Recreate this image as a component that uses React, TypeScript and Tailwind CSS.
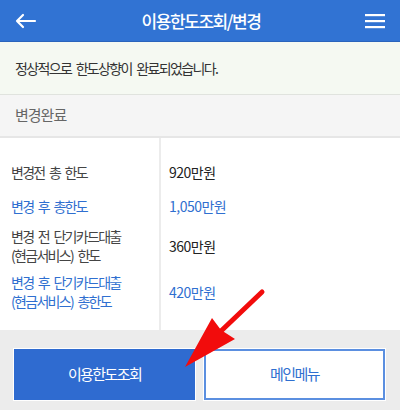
const font = "font-['Noto_Sans_CJK_KR',sans-serif]";

function Row({ label, value, blue, two }: { label: string[]; value: string; blue?: boolean; two?: boolean }) {
  const color = blue ? "text-[#2f6fd0]" : "text-[#444]";
  return (
    <div className={`flex ${two ? "h-[46px]" : "h-[34px]"}`}>
      <div className={`w-[159px] pl-[11px] flex flex-col justify-center text-[14px] leading-[19px] tracking-[-1.7px] [word-spacing:3px] ${color}`}>
        {label.map((l) => (
          <span key={l}>{l}</span>
        ))}
      </div>
      <div className={`pl-[10px] flex items-center text-[14px] tracking-[-0.5px] ${blue ? "text-[#2f6fd0]" : "text-[#222]"}`}>
        {value}
      </div>
    </div>
  );
}

export default function App() {
  return (
    <div className={`relative w-[400px] h-[410px] overflow-hidden flex flex-col bg-[#ececec] ${font}`}>
      <div className="h-[42px] bg-[#3173d3] border-b border-[#2a64bc] flex items-center justify-between px-[15px] text-white">
        <svg width="22" height="16" viewBox="0 0 22 16" fill="none" stroke="white" strokeWidth="2.2" strokeLinecap="round" strokeLinejoin="round">
          <path d="M20 8H2M8 2L2 8l6 6" />
        </svg>
        <span className="text-[17px] font-medium tracking-[-1.4px]">이용한도조회/변경</span>
        <svg width="20" height="16" viewBox="0 0 20 16" fill="white">
          <rect x="0" y="1" width="20" height="2.2" />
          <rect x="0" y="7" width="20" height="2.2" />
          <rect x="0" y="13" width="20" height="2.2" />
        </svg>
      </div>

      <div className="h-[53px] bg-[#f5f9f2] border-b border-[#e0e3de] flex items-center pl-[15px] text-[14px] tracking-[-1.65px] [word-spacing:3px] text-[#333]">
        정상적으로 한도상향이 완료되었습니다.
      </div>

      <div className="h-[43px] bg-[#f5f5f5] border-b-2 border-[#e6e6e6] flex items-center pl-[15px] text-[15px] tracking-[-1px] text-[#666]">
        변경완료
      </div>

      <div className="relative h-[192px] bg-white pt-[17px]">
        <div className="absolute left-[159px] top-0 bottom-0 w-[2px] bg-[#ececec]" />
        <Row label={["변경전 총 한도"]} value="920만원" />
        <Row label={["변경 후 총한도"]} value="1,050만원" blue />
        <Row label={["변경 전 단기카드대출", "(현금서비스) 한도"]} value="360만원" two />
        <Row label={["변경 후 단기카드대출", "(현금서비스) 총한도"]} value="420만원" blue two />
      </div>

      <div className="flex gap-[9px] px-[14px] pt-[19px]">
        <button className="w-[181px] h-[51px] bg-[#2f6bd0] ring-1 ring-white text-white text-[15px] tracking-[-1.6px]">
          이용한도조회
        </button>
        <button className="w-[181px] h-[51px] bg-white border-2 border-[#5b8fe0] ring-1 ring-white text-[#2f6fd0] text-[15px] tracking-[-1.6px]">
          메인메뉴
        </button>
      </div>

      <svg className="absolute inset-0 pointer-events-none" width="400" height="410" viewBox="0 0 400 410">
        <line x1="262" y1="292" x2="220" y2="332" stroke="#f20c0c" strokeWidth="5" strokeLinecap="round" />
        <polygon points="185,367 212,318 221,330 235,339" fill="#f20c0c" />
      </svg>
    </div>
  );
}
